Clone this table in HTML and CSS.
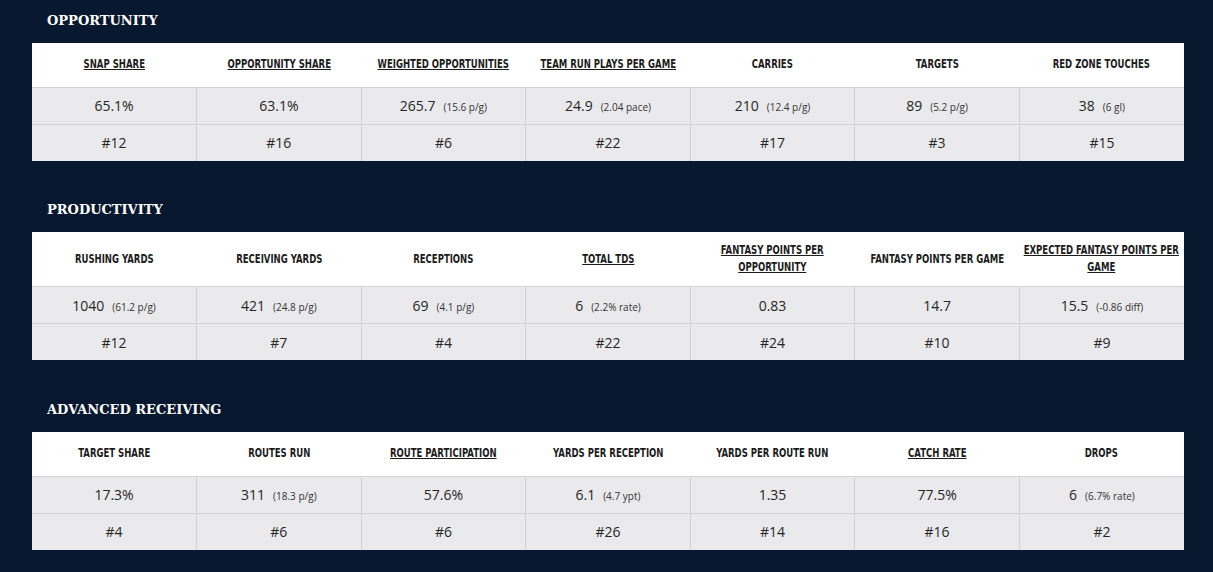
FILE: index.html
```html
<!DOCTYPE html>
<html lang="en">
<head>
<meta charset="utf-8">
<title>Stats</title>
<link rel="stylesheet" href="styles.css">
</head>
<body>
<main class="page">
  <section class="section">
    <h2 class="section-title">OPPORTUNITY</h2>
    <table class="stats">
      <thead>
        <tr>
          <th><span class="hl"><a class="link">SNAP SHARE</a></span></th>
          <th><span class="hl"><a class="link">OPPORTUNITY SHARE</a></span></th>
          <th><span class="hl"><a class="link">WEIGHTED OPPORTUNITIES</a></span></th>
          <th><span class="hl"><a class="link">TEAM RUN PLAYS PER GAME</a></span></th>
          <th><span class="hl">CARRIES</span></th>
          <th><span class="hl">TARGETS</span></th>
          <th><span class="hl">RED ZONE TOUCHES</span></th>
        </tr>
      </thead>
      <tbody>
        <tr>
          <td>65.1%</td>
          <td>63.1%</td>
          <td>265.7<span class="sub">(15.6 p/g)</span></td>
          <td>24.9<span class="sub">(2.04 pace)</span></td>
          <td>210<span class="sub">(12.4 p/g)</span></td>
          <td>89<span class="sub">(5.2 p/g)</span></td>
          <td>38<span class="sub">(6 gl)</span></td>
        </tr>
        <tr>
          <td>#12</td><td>#16</td><td>#6</td><td>#22</td><td>#17</td><td>#3</td><td>#15</td>
        </tr>
      </tbody>
    </table>
  </section>

  <section class="section">
    <h2 class="section-title">PRODUCTIVITY</h2>
    <table class="stats">
      <thead>
        <tr>
          <th><span class="hl">RUSHING YARDS</span></th>
          <th><span class="hl">RECEIVING YARDS</span></th>
          <th><span class="hl">RECEPTIONS</span></th>
          <th><span class="hl"><a class="link">TOTAL TDS</a></span></th>
          <th><span class="hl"><a class="link">FANTASY POINTS PER OPPORTUNITY</a></span></th>
          <th><span class="hl">FANTASY POINTS PER GAME</span></th>
          <th><span class="hl"><a class="link">EXPECTED FANTASY POINTS PER GAME</a></span></th>
        </tr>
      </thead>
      <tbody>
        <tr>
          <td>1040<span class="sub">(61.2 p/g)</span></td>
          <td>421<span class="sub">(24.8 p/g)</span></td>
          <td>69<span class="sub">(4.1 p/g)</span></td>
          <td>6<span class="sub">(2.2% rate)</span></td>
          <td>0.83</td>
          <td>14.7</td>
          <td>15.5<span class="sub">(-0.86 diff)</span></td>
        </tr>
        <tr>
          <td>#12</td><td>#7</td><td>#4</td><td>#22</td><td>#24</td><td>#10</td><td>#9</td>
        </tr>
      </tbody>
    </table>
  </section>

  <section class="section">
    <h2 class="section-title">ADVANCED RECEIVING</h2>
    <table class="stats">
      <thead>
        <tr>
          <th><span class="hl">TARGET SHARE</span></th>
          <th><span class="hl">ROUTES RUN</span></th>
          <th><span class="hl"><a class="link">ROUTE PARTICIPATION</a></span></th>
          <th><span class="hl">YARDS PER RECEPTION</span></th>
          <th><span class="hl">YARDS PER ROUTE RUN</span></th>
          <th><span class="hl"><a class="link">CATCH RATE</a></span></th>
          <th><span class="hl">DROPS</span></th>
        </tr>
      </thead>
      <tbody>
        <tr>
          <td>17.3%</td>
          <td>311<span class="sub">(18.3 p/g)</span></td>
          <td>57.6%</td>
          <td>6.1<span class="sub">(4.7 ypt)</span></td>
          <td>1.35</td>
          <td>77.5%</td>
          <td>6<span class="sub">(6.7% rate)</span></td>
        </tr>
        <tr>
          <td>#4</td><td>#6</td><td>#6</td><td>#26</td><td>#14</td><td>#16</td><td>#2</td>
        </tr>
      </tbody>
    </table>
  </section>
</main>
</body>
</html>
```

FILE: styles.css
```css
* { box-sizing: border-box; }

html, body {
  margin: 0;
  padding: 0;
  background: #08182e;
}

.page {
  padding: 0 29px 0 32px;
  display: flex;
  flex-direction: column;
  gap: 28.6px;
}

.section {
  display: flex;
  flex-direction: column;
}

.section-title {
  margin: 0;
  height: 42.7px;
  padding: 12px 0 0 15px;
  font-family: "DejaVu Serif", serif;
  font-weight: bold;
  font-size: 13px;
  line-height: 18px;
  color: #ffffff;
}

.stats {
  width: 1152px;
  border-collapse: collapse;
  table-layout: fixed;
}

.stats th {
  background: #ffffff;
  height: 44.5px;
  padding: 10px 4px;
  font-family: "DejaVu Sans Condensed", "DejaVu Sans", sans-serif;
  font-stretch: condensed;
  font-weight: bold;
  font-size: 12px;
  line-height: 17px;
  color: #1c1c1c;
  text-align: center;
  vertical-align: middle;
}

.hl {
  display: block;
  margin: 0 -21px;
  transform: scaleX(0.79);
  transform-origin: center;
}

.link {
  color: #1c1c1c;
  text-decoration: underline;
}

.stats td {
  background: #eaeaec;
  height: 37px;
  padding: 0 4px;
  border-top: 1px solid #d2d2d4;
  font-family: "Open Sans", sans-serif;
  font-size: 14px;
  color: #262626;
  text-align: center;
  vertical-align: middle;
}

.stats td + td {
  border-left: 1px solid #d2d2d4;
}

.stats tbody tr:last-child td {
  height: 36.7px;
}

.sub {
  margin-left: 8px;
  font-size: 10px;
  color: #333333;
}
```
